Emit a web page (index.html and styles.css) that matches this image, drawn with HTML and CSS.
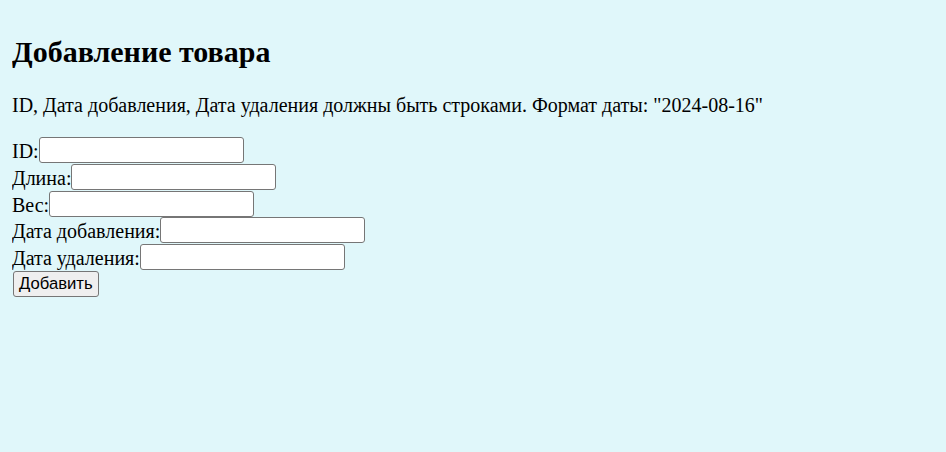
FILE: index.html
```html
<!DOCTYPE html>
<html lang="ru">
<head>
<meta charset="utf-8">
<title>Добавление товара</title>
<link rel="stylesheet" href="styles.css">
</head>
<body>
<h2 class="title">Добавление товара</h2>
<p class="note">ID, Дата добавления, Дата удаления должны быть строками. Формат даты: "2024-08-16"</p>
<form class="form">
  <div class="row"><label class="label">ID:</label><input class="field" type="text"></div>
  <div class="row"><label class="label">Длина:</label><input class="field" type="text"></div>
  <div class="row"><label class="label">Вес:</label><input class="field" type="text"></div>
  <div class="row"><label class="label">Дата добавления:</label><input class="field" type="text"></div>
  <div class="row"><label class="label">Дата удаления:</label><input class="field" type="text"></div>
  <div class="row"><button class="btn" type="button">Добавить</button></div>
</form>
</body>
</html>
```
FILE: styles.css
```css
html {
  background: #e0f7fa;
}
body {
  margin: 10px 12px;
  font-family: "Liberation Serif", "Times New Roman", serif;
  font-size: 20px;
  color: #000;
}
.title {
  font-size: 30px;
  font-weight: bold;
  margin: 25px 0;
  line-height: normal;
}
.note {
  margin: 20px 0;
  line-height: normal;
}
.form {
  margin: 0;
}
.row {
  display: flex;
  align-items: center;
  height: 26.67px;
}
.label {
  line-height: 23px;
  padding-top: 3px;
}
.field {
  box-sizing: border-box;
  width: 205px;
  height: 26px;
  margin: 0;
  padding: 1px 3px;
  border: 1px solid #767676;
  border-radius: 3px;
  background: #fff;
  font-family: "Liberation Sans", Arial, sans-serif;
  font-size: 16.67px;
}
.btn {
  box-sizing: border-box;
  height: 26px;
  margin: 0 0 0 1px;
  padding: 0 5px;
  border: 1px solid #767676;
  border-radius: 3px;
  background: #efefef;
  font-family: "Liberation Sans", Arial, sans-serif;
  font-size: 16.67px;
  color: #000;
}
```
